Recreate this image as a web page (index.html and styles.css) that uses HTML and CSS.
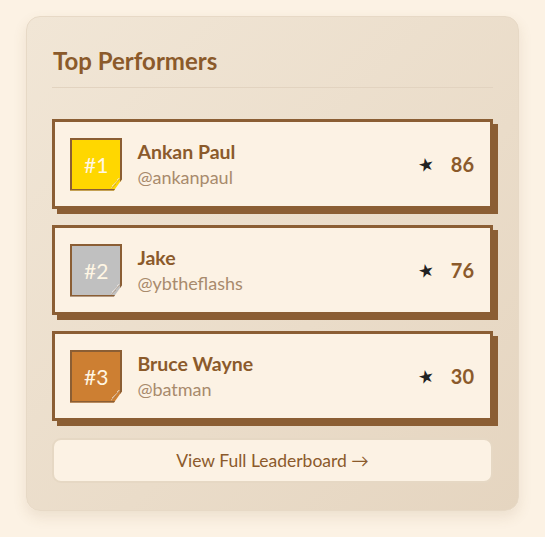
FILE: index.html
```html
<!DOCTYPE html>
<html>
<head>
<meta charset="utf-8">
<link rel="stylesheet" href="styles.css">
</head>
<body>
<div class="card">
  <h2 class="title">Top Performers</h2>
  <div class="list">
    <div class="row">
      <div class="badge gold">#1</div>
      <div class="info">
        <div class="name">Ankan Paul</div>
        <div class="handle">@ankanpaul</div>
      </div>
      <div class="score"><span class="star">★</span><span class="num">86</span></div>
    </div>
    <div class="row">
      <div class="badge silver">#2</div>
      <div class="info">
        <div class="name">Jake</div>
        <div class="handle">@ybtheflashs</div>
      </div>
      <div class="score"><span class="star">★</span><span class="num">76</span></div>
    </div>
    <div class="row">
      <div class="badge bronze">#3</div>
      <div class="info">
        <div class="name">Bruce Wayne</div>
        <div class="handle">@batman</div>
      </div>
      <div class="score"><span class="star">★</span><span class="num">30</span></div>
    </div>
  </div>
  <button class="more">View Full Leaderboard →</button>
</div>
</body>
</html>
```
FILE: styles.css
```css
* { box-sizing: border-box; }
html, body { margin: 0; }
body {
  background: #fcf2e4;
  font-family: "Lato", "Open Sans", sans-serif;
  padding: 16px 26px 26px 26px;
}
.card {
  width: 493px;
  height: 495px;
  border-radius: 14px;
  background: linear-gradient(135deg, #f1e6d6 0%, #eadcc9 60%, #e5d5c0 100%);
  border: 1px solid #e7d9c6;
  box-shadow: 0 6px 14px rgba(120, 90, 50, 0.12);
  padding: 25px 25px 27px 25px;
  display: flex;
  flex-direction: column;
}
.title {
  margin: 0 0 31px 0;
  padding: 4px 0 12px 1px;
  border-bottom: 1px solid #e2d3c0;
  font-size: 24px;
  font-weight: 700;
  color: #8b5a2b;
  line-height: 29px;
}
.list {
  display: flex;
  flex-direction: column;
  gap: 16px;
}
.row {
  display: flex;
  align-items: center;
  gap: 15px;
  background: #fcf2e4;
  border: 3px solid #8b5e34;
  box-shadow: 5px 5px 0 #8b5e34;
  padding: 16px 16px 16px 15px;
  width: 441px;
  height: 90px;
}
.badge {
  position: relative;
  border: 2px solid #8b5e34;
  padding: 12px 12px;
  line-height: 25px;
  font-size: 21px;
  color: #fff6e4;
  clip-path: polygon(0 0, 100% 0, 100% 78%, 84% 100%, 0 100%);
}
.badge::after {
  content: "";
  position: absolute;
  right: -1px;
  bottom: -1px;
  width: 10px;
  height: 12px;
  background: linear-gradient(to top left, transparent 50%, rgba(139, 94, 52, 0.35) 50%, rgba(255, 255, 255, 0.6) 62%, transparent 62%);
}
.gold { background: #ffd700; }
.silver { background: #c0c0c0; }
.bronze { background: #cd7f32; }
.info {
  display: flex;
  flex-direction: column;
  gap: 4px;
  flex: 1;
}
.name {
  font-size: 19.5px;
  font-weight: 700;
  color: #8b5a2b;
  line-height: 22px;
}
.handle {
  font-size: 18px;
  color: #a88a6c;
  line-height: 21px;
}
.score {
  display: flex;
  align-items: center;
  gap: 17px;
}
.star {
  font-size: 18px;
  color: #222;
  font-family: "DejaVu Sans", sans-serif;
  display: inline-block;
  transform: rotate(-12deg);
}
.num {
  font-size: 20px;
  font-weight: 700;
  color: #8b5a2b;
}
.more {
  margin-top: 17px;
  height: 46px;
  width: 441px;
  border-radius: 9px;
  border: 2px solid #e6d8c4;
  background: #fcf2e4;
  font-family: "Lato", sans-serif;
  font-size: 17.5px;
  color: #8b5a2b;
}
```
